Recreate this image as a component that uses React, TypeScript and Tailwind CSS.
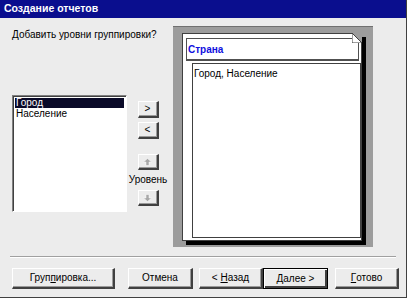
import React from 'react';

const font = { fontFamily: '"Liberation Sans", Arial, sans-serif' };

function Btn({ children, className = '', isDefault = false }: { children: React.ReactNode; className?: string; isDefault?: boolean }) {
  return (
    <div
      className={
        'flex items-center justify-center bg-[#ececec] text-[10px] leading-none text-black ' +
        (isDefault
          ? 'border border-black shadow-[inset_1px_1px_0_#fff,inset_-2px_-2px_0_#404040] '
          : 'border-t border-l border-white border-r-2 border-b-2 border-r-[#404040] border-b-[#404040] shadow-[inset_-1px_-1px_0_#9a9a9a] ') +
        className
      }
    >
      {children}
    </div>
  );
}

function Arrow({ up }: { up: boolean }) {
  return (
    <svg width="9" height="8" viewBox="0 0 9 8">
      <polygon
        points={up ? '4.5,0.5 8.5,4 6,4 6,7.5 3,7.5 3,4 0.5,4' : '4.5,7.5 8.5,4 6,4 6,0.5 3,0.5 3,4 0.5,4'}
        fill="#a8a8a8"
        stroke="#fff"
        strokeWidth="0.5"
      />
    </svg>
  );
}

export default function App() {
  return (
    <div style={font} className="w-[407px] h-[298px] bg-[#ececec] border-r border-b border-[#404040] overflow-hidden">
      {/* title bar */}
      <div className="h-[18px] bg-[#0a0e8e] flex items-center pl-[4px]">
        <span className="text-white text-[10.5px] font-bold">Создание отчетов</span>
      </div>

      {/* main area */}
      <div className="h-[238px] flex">
        <div className="w-[173px] pl-[12px]">
          <div className="mt-[10px] text-[10px] leading-[13px] text-black">Добавить уровни группировки?</div>
          <div className="mt-[54px] flex">
            {/* list */}
            <div className="w-[115px] h-[117px] bg-white border-t border-l border-[#808080] border-r border-b border-r-white border-b-white shadow-[inset_1px_1px_0_#404040] pt-[2px] pl-[2px] pr-[2px]">
              <div className="h-[10px] bg-[#0a0a28] text-white text-[10px] leading-[10px] pl-[1px]">Город</div>
              <div className="h-[11px] text-black text-[10px] leading-[12px] pl-[1px]">Население</div>
            </div>
            {/* side buttons */}
            <div className="w-[42px] flex flex-col items-center">
              <Btn className="mt-[6px] w-[21px] h-[17px]">&gt;</Btn>
              <Btn className="mt-[4px] w-[21px] h-[17px]">&lt;</Btn>
              <Btn className="mt-[15px] w-[21px] h-[16px]">
                <Arrow up />
              </Btn>
              <div className="mt-[3px] text-[10px] leading-[13px] text-black">Уровень</div>
              <Btn className="mt-[4px] w-[21px] h-[16px]">
                <Arrow up={false} />
              </Btn>
            </div>
          </div>
        </div>

        {/* preview frame */}
        <div className="mt-[8px] w-[200px] h-[221px] bg-[#9c9c9c] border-t border-[#707070] pt-[6px] pl-[9px]">
          <div className="relative w-[180px] h-[208px] bg-white border border-[#404040] shadow-[4px_4px_0_#000]">
            <svg className="absolute -top-px -right-px" width="10" height="10" viewBox="0 0 10 10">
              <polygon points="0,0 10,0 10,10" fill="#9c9c9c" />
              <polygon points="0,0 10,10 0,10" fill="#fff" stroke="#404040" strokeWidth="1" />
            </svg>
            <div className="ml-[3px] mt-[4px] w-[173px] h-[23px] border border-[#505050] border-b-2 pl-[1px] pt-[1px] leading-none">
              <span className="text-[10px] font-bold text-[#1010e0] leading-none">Страна</span>
            </div>
            <div className="ml-[9px] mt-[2px] w-[169px] h-[175px] border border-[#404040] pl-[1px] pt-[1px] leading-[13px]">
              <span className="text-[10px] leading-[13px] text-black">Город, Население</span>
            </div>
          </div>
        </div>
      </div>

      {/* separator */}
      <div className="mx-[10px] border-t border-[#a0a0a0] border-b border-b-white"></div>

      {/* bottom buttons */}
      <div className="mt-[10px] flex pl-[12px]">
        <Btn className="w-[103px] h-[21px]">
          Груп<span className="underline">п</span>ировка...
        </Btn>
        <Btn className="ml-[13px] w-[65px] h-[21px]">Отмена</Btn>
        <Btn className="ml-[6px] w-[64px] h-[21px]">
          &lt;&nbsp;<span className="underline">Н</span>азад
        </Btn>
        <Btn isDefault className="w-[65px] h-[21px]">
          <span className="underline">Д</span>алее&nbsp;&gt;
        </Btn>
        <Btn className="ml-[7px] w-[64px] h-[21px]">
          <span className="underline">Г</span>отово
        </Btn>
      </div>
    </div>
  );
}
